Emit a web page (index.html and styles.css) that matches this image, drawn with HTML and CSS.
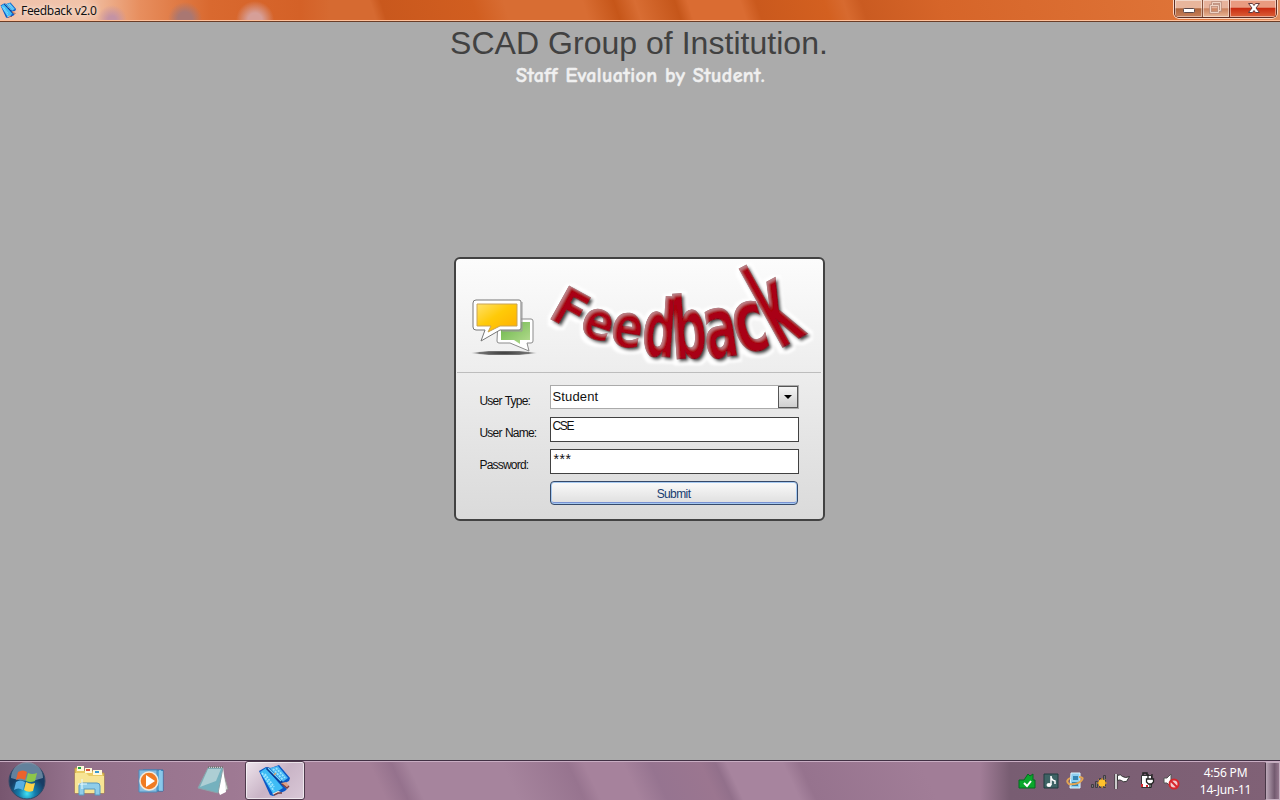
FILE: index.html
```
<!DOCTYPE html>
<html lang="en">
<head>
<meta charset="utf-8">
<title>Feedback v2.0</title>
<link rel="stylesheet" href="styles.css">
</head>
<body>
<svg width="0" height="0" class="defs">
  <defs>
    <symbol id="book" viewBox="0 0 34 34">
      <path d="M1 7l7-4 5 1 8-3 11 13-1 3-4 2-2 2 4 4-2 2-12 5-3-1z" fill="#0b58c6"/>
      <path d="M2 8l6-4 17 20-10 6z" fill="#3fbcf5"/>
      <path d="M12 4l8-2 10 12-7 5z" fill="#4ab7f3"/>
      <path d="M4 9l12 18M15 5l10 11M18 4l9 10M7 10l9 13" stroke="#9be6ff" stroke-width="1.800" stroke-dasharray="2 1"/>
      <path d="M9 4l16 16" stroke="#073a92" stroke-width="3"/><path d="M10 4l13 13" stroke="#72d5ff" stroke-width="1.200"/>
      <path d="M16 11l2-2" stroke="#e4a96a" stroke-width="1.500"/>
      <path d="M14 30l6-3 3 1-6 3z" fill="#fff0df"/><path d="M23 19l5-1 3 4-4 1z" fill="#e0a184"/>
      <path d="M24 20l5 4 2-2M16 31l4-2 4 0" stroke="#7a4044" stroke-width="1.400" fill="none"/>
    </symbol>
  </defs>
</svg>
<div class="desktop">
  <header class="titlebar">
    <svg class="app-icon" width="17" height="19"><use href="#book"/></svg>
    <span class="caption">Feedback v2.0</span>
    <div class="controls">
      <div class="ctl min"><svg width="28" height="17"><rect x="8.500" y="8.500" width="11" height="4" rx="1" fill="#fff" stroke="#59484a"/></svg></div>
      <div class="ctl max"><svg width="26" height="17"><path d="M9.500 5V2.500h8v8h-2M7.500 5.500h8v7h-8z" fill="none" stroke="#ba907f" stroke-width="2.500"/><path d="M9.500 5V2.500h8v8h-2M7.500 5.500h8v7h-8z" fill="none" stroke="#efd4c5"/></svg></div>
      <div class="ctl close"><svg width="47" height="17"><path d="M18.500 3.500h4l1.500 2 1.500-2h4L26 8l3.500 4.500h-4l-1.500-2-1.500 2h-4L22 8z" fill="#fff" stroke="#633b3d"/></svg></div>
    </div>
  </header>
  <main>
    <h1>SCAD Group of Institution.</h1>
    <h2>Staff Evaluation by Student.</h2>
    <section class="panel">
      <div class="banner">
        <svg class="bubbles" width="70" height="64" viewBox="0 0 70 64">
          <defs>
            <linearGradient id="yellow" x2="1" y2="1"><stop stop-color="#ffe16a"/><stop offset=".45" stop-color="#ffca08"/><stop offset="1" stop-color="#ffad00"/></linearGradient>
            <linearGradient id="green" x2="1" y2="1"><stop stop-color="#69b548"/><stop offset="1" stop-color="#b6dc91"/></linearGradient>
            <radialGradient id="ground"><stop stop-color="#333"/><stop offset=".75" stop-color="#777"/><stop offset="1" stop-color="#ddd" stop-opacity="0"/></radialGradient>
          </defs>
          <ellipse cx="33" cy="57" rx="34" ry="2.500" fill="url(#ground)"/>
          <path d="M27 23h33q2 0 2 2v20q0 2-2 2h-4l2 8-19-8H28q-2 0-2-2z" fill="#fff" stroke="#8b8b8b"/>
          <path d="M30 26h29v18h-10v4l-6-4H30z" fill="url(#green)"/>
          <path d="M5 4h43q2 0 2 2v26q0 2-2 2H29L10 45l4-11H5q-3 0-3-3V7q0-3 3-3z" fill="#fff" stroke="#777"/>
          <path d="M51 6v29H31" fill="none" stroke="#999"/>
          <path d="M6 8h40v22H29l-12 6 3-6H6z" fill="url(#yellow)" stroke="#c8a358"/>
        </svg>
        <svg class="logo" width="280" height="110" viewBox="0 0 280 110">
          <defs>
            <filter id="bevel" x="-10%" y="-10%" width="120%" height="125%">
              <feMorphology in="SourceAlpha" operator="dilate" radius="4" result="fat"/>
              <feGaussianBlur in="fat" stdDeviation="1.200" result="fatBlur"/>
              <feFlood flood-color="#fff"/><feComposite in2="fatBlur" operator="in" result="halo"/>
              <feOffset in="halo" dx="1" dy="2" result="glow"/>
              <feDropShadow in="SourceGraphic" dx="2.500" dy="2.500" stdDeviation="1.400" flood-color="#111" flood-opacity=".95" result="shaded"/>
              <feOffset in="SourceAlpha" dx="1.800" dy="2" result="inner"/>
              <feGaussianBlur in="inner" stdDeviation=".9" result="innerBlur"/>
              <feFlood flood-color="#c28a90" flood-opacity=".85"/>
              <feComposite in2="SourceAlpha" operator="in"/>
              <feComposite in2="innerBlur" operator="out" result="shine"/>
              <feMerge><feMergeNode in="glow"/><feMergeNode in="shaded"/><feMergeNode in="shine"/></feMerge>
            </filter>
          </defs>
          <g class="letters" filter="url(#bevel)">
            <text transform="translate(6 57) rotate(29) scale(.48 .52)">F</text>
            <text transform="translate(37 73) rotate(19) scale(.46 .53)">e</text>
            <text transform="translate(68 84) rotate(9) scale(.46 .6)">e</text>
            <text transform="translate(100 95) rotate(4) scale(.46 .79)">d</text>
            <text transform="translate(132 99) rotate(-4) scale(.49 .85)">b</text>
            <text transform="translate(166 99) rotate(-8) scale(.5 .87)">a</text>
            <text transform="translate(200 95) rotate(-17) scale(.56 .88)">c</text>
            <text transform="translate(238 89) rotate(-29) scale(.47 1.170)">k</text>
          </g>
        </svg>
      </div>
      <form class="form">
        <label>User Type:</label><div class="select"><span>Student</span><i><svg width="18" height="20"><path d="M5 8h8l-4 4z"/></svg></i></div>
        <label>User Name:</label><div class="field">CSE</div>
        <label>Password:</label><div class="field stars">***</div>
        <button type="button">Submit</button>
      </form>
    </section>
  </main>
  <footer class="taskbar">
    <div class="start"><svg width="40" height="40" viewBox="0 0 40 40">
      <defs><radialGradient id="orb" cx=".5" cy=".85"><stop stop-color="#42e3f5"/><stop offset=".45" stop-color="#147dac"/><stop offset="1" stop-color="#173c64"/></radialGradient></defs>
      <circle cx="20" cy="20" r="18" fill="url(#orb)" stroke="#344a67"/><path d="M4 17a16 16 0 0 1 32 0q-16 6-32 0" fill="#d8e8ef" opacity=".4"/>
      <path d="M11 11q5-3 9 0l-2 8q-5-3-9 0z" fill="#ec622b"/><path d="M21 12q4 2 9 0l-2 8q-5 2-9 0z" fill="#8dc64a"/><path d="M9 21q4-3 9 0l-2 8q-5-3-9 0z" fill="#58aee3"/><path d="M19 21q5 3 9 1l-2 8q-5 2-9-1z" fill="#ffd348"/>
    </svg></div>
    <div class="task"><svg width="34" height="34" viewBox="0 0 34 34">
      <path d="M2 4h8l2 3h8l2 2h9v20H2z" fill="#eacb64" stroke="#b99743"/><path d="M4 2h7v5H4zM12 4h7v5h-7zM20 6h9v5h-9z" fill="#fff9da"/><path d="M5 3h3v2H5z" fill="#24a344"/><path d="M13 5h4v2h-4z" fill="#dd5236"/><path d="M22 7h4v2h-4z" fill="#3b9bd0"/>
      <path d="M2 9h11l3 3h15v17H2z" fill="#f7e494"/><path d="M6 31V22q0-3 3-3h15q3 0 3 3v9h-5v-6H11v6z" fill="#8fcde9" stroke="#5798c1"/><path d="M9 15v10M5 20h9" stroke="#e8fbff"/>
    </svg></div>
    <div class="task"><svg width="34" height="34" viewBox="0 0 34 34"><path d="M8 6h20v21H8z" fill="#57a8d6" stroke="#2b73ab"/><path d="M25 6v21M27 7v20" stroke="#bce8ff"/><path d="M4 6h18v22H4z" fill="#89bde0" stroke="#4b8bbb"/><circle cx="14" cy="17" r="9" fill="#f07b22" stroke="#f3e9da" stroke-width="1.500"/><path d="M11 11l9 6-9 6z" fill="#fff"/></svg></div>
    <div class="task"><svg width="34" height="34" viewBox="0 0 34 34"><path d="M25 4l6 21-8 5z" fill="#d9dddb" stroke="#989595"/><path d="M11 3h15l3 25-6 3z" fill="#fff"/><path d="M11 4h15l-5 25L1 24z" fill="#75b1be" stroke="#8ba3a9"/><path d="M11 5h13l-5 12L3 23z" fill="#c5dadd" opacity=".7"/><path d="M11 3h15" stroke="#777" stroke-width="2" stroke-dasharray="1 1"/></svg></div>
    <div class="task active"><svg width="34" height="34"><use href="#book"/></svg></div>
    <div class="tray">
      <svg width="18" height="18" viewBox="0 0 18 18"><path d="M1 8h5l4-6 2 2 3-2v6h2v8H1z" fill="#0aa72c" stroke="#056c21"/><path d="M6 11l3 3 4-5" stroke="#fff" stroke-width="2" fill="none"/></svg>
      <svg width="18" height="18" viewBox="0 0 18 18"><path d="M2 2h14v14H2z" fill="#3e6365" stroke="#213d40"/><path d="M9 13V4q0 4 4 5v3" stroke="#fff" fill="none" stroke-width="1.500"/><ellipse cx="7" cy="13" rx="2.500" ry="2" fill="#fff"/></svg>
      <svg width="18" height="18" viewBox="0 0 18 18"><path d="M5 1h9v15H4z" fill="#8fcff0" stroke="#e0f6ff"/><path d="M7 4h5v4H7zM6 10h6v4H6z" fill="#3486b5"/><path d="M13 5q6 0 2 4T3 12Q-1 9 4 6" fill="none" stroke="#e3a552" stroke-width="2"/></svg>
      <svg width="18" height="18" viewBox="0 0 18 18"><path d="M1.500 12.500h2v3h-2zM5.500 9.500h2v6h-2zM9.500 6.500h2v9h-2zM13.500 3.500h2v12h-2z" fill="#777" stroke="#413d43"/><path d="M12 6v10M7 11h10M8.500 7.500l7 7M15.500 7.500l-7 7" stroke="#e79a16"/><circle cx="12" cy="11" r="3.500" fill="#ffc22d"/></svg>
      <svg width="18" height="18" viewBox="0 0 18 18"><path d="M2 2v15" stroke="#333" stroke-width="3"/><path d="M2 2v15" stroke="#fff" stroke-width="1.500"/><path d="M3.500 3.500q3-2 5 1 3 2 7 0l-3 5q-4 1-5-1-2-1-4 0z" fill="#fff" stroke="#333"/></svg>
      <svg width="18" height="18" viewBox="0 0 18 18"><path d="M3.500 3.500h10v12h-10z" fill="#fff" stroke="#333"/><path d="M5 3V1h4v2" stroke="#222" stroke-width="1.500" fill="none"/><path d="M3 12h2v3H3zM8 13h2v2H8z" fill="#d7252b"/><path d="M10 2v5M14 2v5M8.500 7h7v3l-2 2h-3l-2-2zM12 12v4" fill="#fff" stroke="#222" stroke-width="1.300"/></svg>
      <svg width="18" height="18" viewBox="0 0 18 18"><path d="M2 6h3l4-4v13l-4-4H2z" fill="#fff" stroke="#555"/><circle cx="12" cy="12" r="4.500" fill="#f1cccd" stroke="#d7252b" stroke-width="2"/><path d="M9 9l6 6" stroke="#d7252b" stroke-width="2"/></svg>
    </div>
    <div class="clock"><span>4:56 PM</span><span>14-Jun-11</span></div>
    <div class="peek"></div>
  </footer>
</div>
</body>
</html>
```
FILE: styles.css
```
* { box-sizing: border-box; }
body { margin: 0; font-family: "Liberation Sans", Arial, sans-serif; }
.defs { position: absolute; }
.desktop { width: 1280px; height: 800px; display: flex; flex-direction: column; overflow: hidden; background: #ababab; }
.titlebar { height: 22px; flex: none; display: flex; align-items: flex-start; border-bottom: 1px solid #6b3d27; box-shadow: inset 0 -1px #ffc09a; background:
  radial-gradient(circle at 185px 19px, #a97772 0 7px, #a9777200 17px),
  radial-gradient(circle at 255px 20px, #d69f98 0 7px, #d69f9800 19px),
  radial-gradient(circle at 112px 20px, #c493a4 0 4px, #c493a400 15px),
  linear-gradient(90deg, #efc2ac 0, #f1c3a9 85px, #e78e5e 140px, #d9692f 210px, #d46127 300px, transparent 330px),
  linear-gradient(72deg, #d66a31 0 358px, #c9581d 368px, #d15e20 455px, #d86d33 485px 560px, #c65619 590px, #d86d33 610px, #c5561a 648px, #da6c32 660px 710px, #ca591d 725px, #d36020 790px, #d76a2f 808px, #ca5b21 825px, #d66529 900px, #df7438 1140px, #e1a27f 1280px); }
.app-icon { margin: 1px 4px 0 0; }
.caption { font: 12px/20px "Noto Sans", sans-serif; color: #111; padding-top: 1px; letter-spacing: -.32px; text-shadow: 0 0 5px #fff; }
.controls { margin-left: auto; margin-right: 3px; height: 18px; display: flex; border: 1px solid #5c3026; border-top: 0; border-radius: 0 0 5px 5px; overflow: hidden; box-shadow: 0 1px #ffd8c3, 1px 0 #ffd8c3, -1px 0 #ffd8c3; }
.ctl { height: 17px; box-shadow: inset 0 0 0 1px #ffffff73; background: linear-gradient(#e8b69c 0 45%, #ad653d 52%, #c87f58); }
.ctl svg { display: block; }
.min { width: 27px; }
.max { width: 27px; border-left: 1px solid #87513b; background: linear-gradient(#e7b39c 0 45%, #cc8460 52%, #e8b594); }
.close { width: 47px; border-left: 1px solid #672d20; background: linear-gradient(#e99b80 0 42%, #c92d12 50%, #db6038); }
main { flex: 1; display: flex; flex-direction: column; align-items: center; }
h1 { margin: 2px 2px 0 0; height: 38px; font-size: 32px; line-height: 38px; font-weight: 400; color: #414141; white-space: nowrap; letter-spacing: .03px; }
h2 { margin: 3px 0 0 1px; height: 22px; font: 700 20px/22px "Comic Sans MS", "Comic Neue", Lato, sans-serif; color: #f0f0f0; white-space: nowrap; letter-spacing: .4px; -webkit-text-stroke: .5px #f0f0f0; }
.panel { width: 371px; height: 264px; margin: 170px 2px 0 0; border: 2px solid #424242; border-radius: 6px; background: linear-gradient(#fcfcfc, #dadada); }
.banner { height: 114px; margin: 0 2px 0 1px; border-bottom: 1px solid #bdbdbd; display: flex; }
.bubbles { flex: none; margin: 37px 0 0 14px; }
.logo { flex: none; margin-top: 1px; overflow: visible; }
.letters { font: 700 100px "DejaVu Sans", sans-serif; fill: #a90014; stroke: #8a1020; stroke-width: 1.5; }
.form { display: grid; grid-template-columns: 71px 249px; grid-template-rows: repeat(4, 25px); row-gap: 7px; padding: 11px 0 0 23px; }
label { font-size: 12px; line-height: 14px; padding: 10px 0 0 1px; letter-spacing: -.8px; word-spacing: .8px; color: #111; }
.select, .field { background: #fff; font-size: 12px; color: #111; }
.select { height: 24px; margin-top: 1px; border: 1px solid #aaa; display: flex; justify-content: space-between; }
.select span { padding: 3px 2px; font-size: 13px; line-height: 15px; letter-spacing: .15px; }
.select i { width: 20px; height: 22px; border: 1px solid #555; background: linear-gradient(#f5f5f5, #cfcfcf); }
.field { height: 25px; border: 1px solid #414141; margin-top: 1px; padding: 1px 2px; line-height: 15px; letter-spacing: -1.3px; }
.stars { font-size: 14px; line-height: 18px; letter-spacing: .6px; padding: 0 3px; }
button { grid-column: 2; width: 248px; height: 24px; margin-top: 1px; padding: 1px 0 0; border: 1px solid #354969; border-radius: 4px; box-shadow: inset 0 0 0 1px #a6c9f0, inset 0 -2px #7993d4; background: linear-gradient(#fafafa, #dedede); color: #173c70; font: 12px "Liberation Sans", sans-serif; letter-spacing: -.6px; }
.taskbar { height: 40px; flex: none; display: flex; align-items: center; border-top: 1px solid #413044; box-shadow: inset 0 1px #c9adc3; background:
  linear-gradient(90deg, #77566f 0, #93718b 70px, #9d7892 220px, #a47f9800 300px, #a47f9800 980px, #785d72 1010px, #806176 1270px),
  linear-gradient(65deg, #a47f98 0 350px, #95728d 370px, #a6849d 385px 470px, #97748f 530px, #a6829c 545px 580px, #967490 605px, #9b7690 650px, #92708b 664px, #a7849e 674px 725px, #96738e 740px, #a17d97 850px); }
.start { width: 59px; height: 40px; padding-left: 7px; }
.task { width: 62px; height: 39px; display: flex; align-items: center; justify-content: center; }
.active { width: 60px; border: 1px solid #4e394c; border-radius: 3px; background: linear-gradient(135deg, #eee4ec, #c9b4c6 50%, #d9c8d7); box-shadow: inset 0 0 0 1px #fff9; }
.tray { margin-left: auto; display: flex; gap: 6px; }
.clock { width: 85px; display: flex; flex-direction: column; align-items: center; font: 12px/17px "Noto Sans", sans-serif; letter-spacing: -.2px; color: #fff; padding-left: 6px; }
.peek { width: 15px; height: 38px; border: 1px solid #c4aebf; border-left-color: #493747; background: linear-gradient(90deg, #bca8b8, #735b70 65%, #94778d); }
```
